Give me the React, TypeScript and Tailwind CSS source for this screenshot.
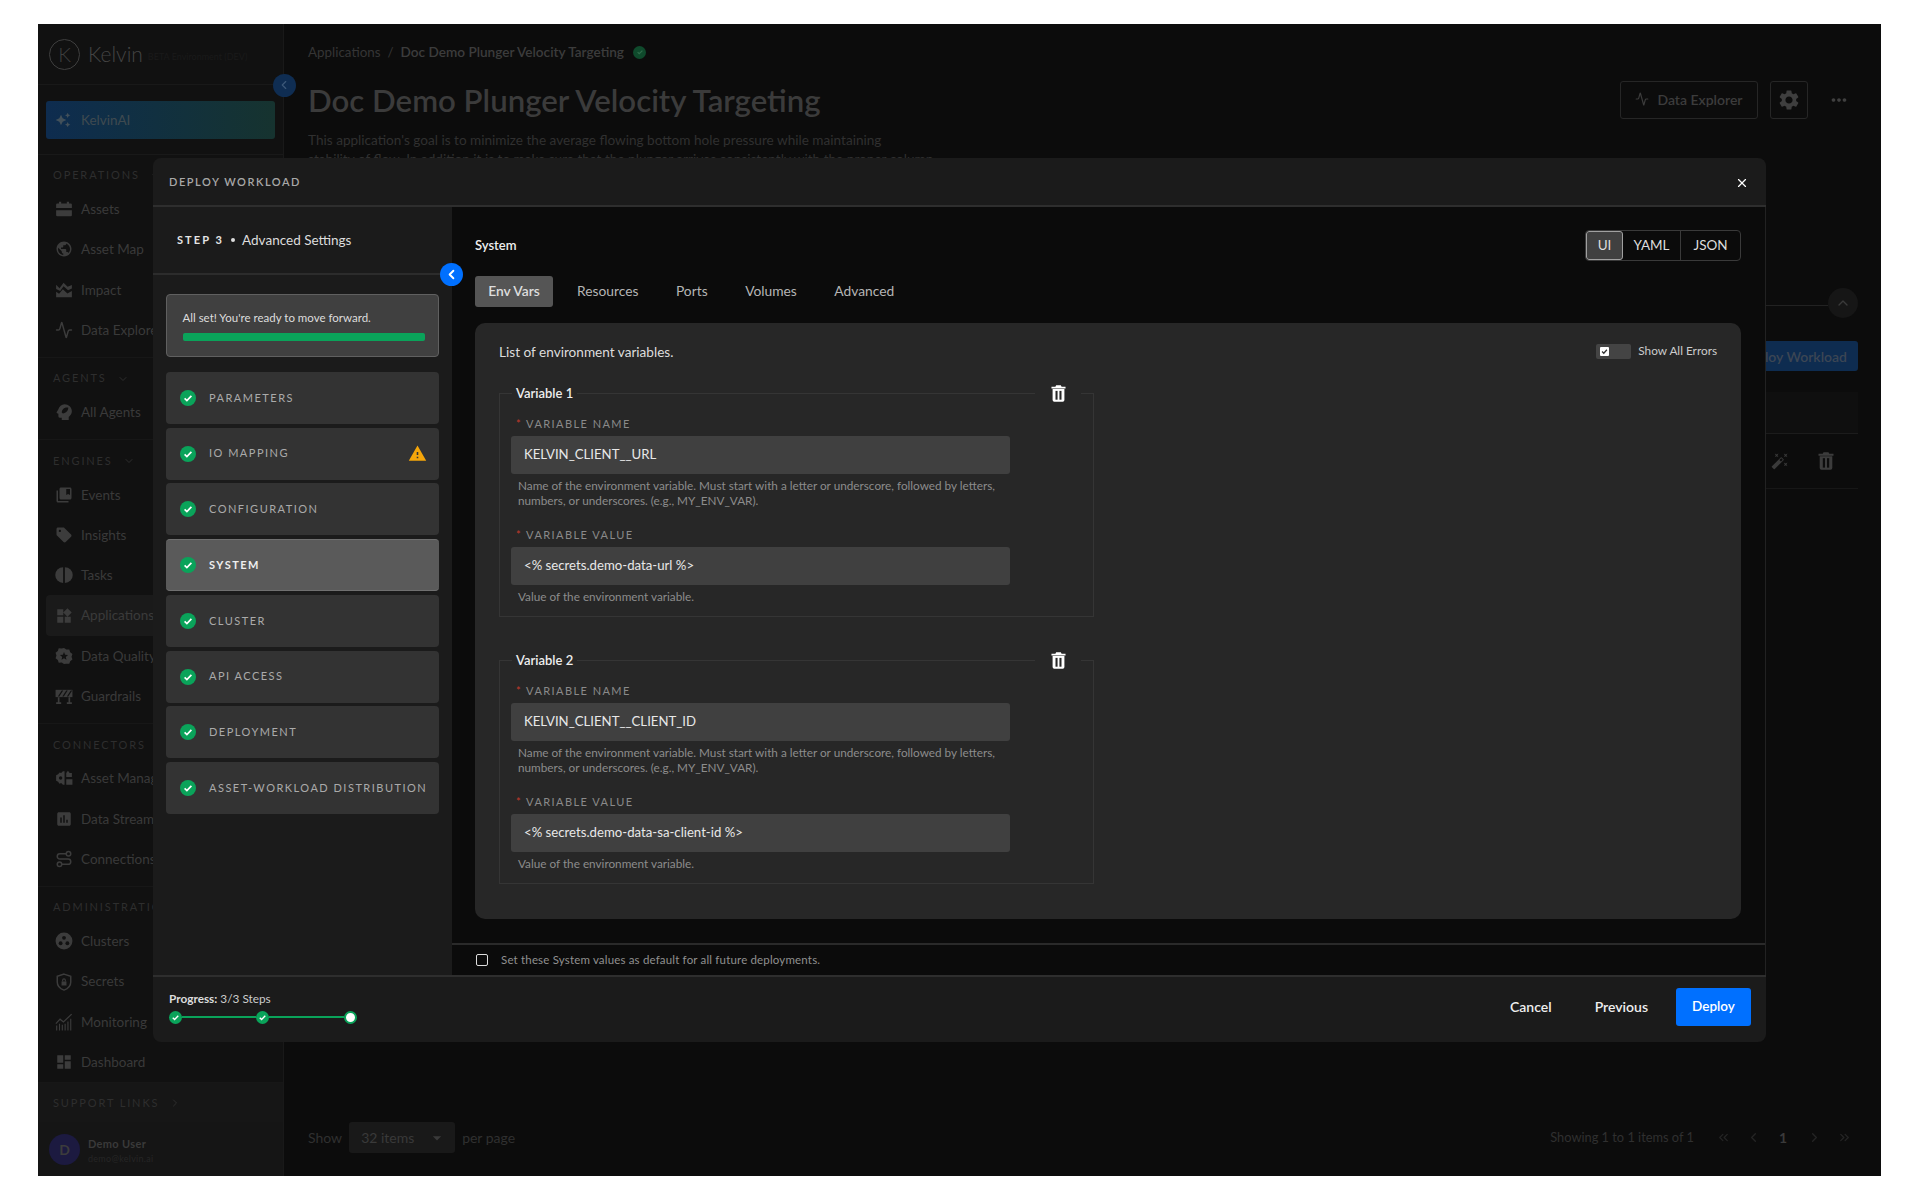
import React from "react";
import { Activity, ChevronDown, ChevronLeft, ChevronRight, ChevronUp, ChevronsLeft, ChevronsRight, Route, X } from "lucide-react";
import {
  MdAssessment, MdAutoAwesome, MdAutoFixHigh, MdCollectionsBookmark, MdDashboard, MdMoreHoriz,
  MdPublic, MdSell, MdSettings, MdWarning, MdWidgets, MdArrowDropDown,
} from "react-icons/md";

type IconProps = { size?: number; className?: string };
const Svg = ({ size = 18, className, children }: IconProps & { children: React.ReactNode }) => (
  <svg width={size} height={size} viewBox="0 0 16 16" fill="currentColor" className={className}>{children}</svg>
);
const BG = "#111111";
const AssetsIcon = (p: IconProps) => (
  <Svg {...p}><path d="M3.5 1.5h2v1.5h5V1.5h2V3h1.5a1 1 0 0 1 1 1v3.2H1V4a1 1 0 0 1 1-1h1.5z" /><path d="M1 9h14v4.5a1 1 0 0 1-1 1H2a1 1 0 0 1-1-1z" /></Svg>
);
const ImpactIcon = (p: IconProps) => (
  <Svg {...p}><path d="M1 7.2V3.4l3 3L7.6 1.6l3.6 3.6 3.8-1.6v3l-3.4 1.6-4-3.6-3 4.2z" /><path d="M1 9.6l2.6 1.8 3.4-4 4 3.6L15 8.8v5.7H1z" /></Svg>
);
const AgentIcon = (p: IconProps) => (
  <Svg {...p}><path d="M8.5 1C12 1 15 3.6 15 7.2c0 2.4-1.3 4.2-2.8 5.2V15H6v-1.800H4.500a1.500 1.500 0 0 1-1.500-1.500V9.500L1.800 9c-.4-.2-.5-.6-.3-1l1.300-2C3.700 3 5.800 1 8.500 1z" /><path d="M6 8.500c0-2.500 2-4.500 4.500-4.500h1.300c0 2.800-2 5-4.800 5.300L6 8.500z" fill={BG} /></Svg>
);
const TasksIcon = (p: IconProps) => (
  <Svg {...p}><path d="M7.200 1v14A7 7 0 0 1 7.200 1z" /><path d="M8.800 1a7 7 0 0 1 0 14z" /></Svg>
);
const QualityIcon = (p: IconProps) => (
  <Svg {...p}><path d="M8 .8l2.100 1.500 2.600-.1.800 2.400 2 1.600-.8 2.400.8 2.400-2 1.600-.8 2.300-2.600-.1L8 15.200l-2.100-1.400-2.600.1-.8-2.300-2-1.600.8-2.400-.8-2.400 2-1.600.8-2.400 2.600.1z" /><path d="M8 4.500l1 2.400 2.600.2-2 1.700.6 2.500L8 9.900l-2.200 1.400.6-2.500-2-1.700 2.600-.2z" fill={BG} /></Svg>
);
const GuardIcon = (p: IconProps) => (
  <Svg {...p}><path d="M.5 2.500h15V9H.5z" /><path d="M2.500 9h1.500v5.500H2.500zM12 9h1.500v5.500H12zM1 13.500h4.500V15H1zM10.500 13.500H15V15h-4.500z" /><path d="M2.500 8.500L6 3h1.300L3.800 8.500zM6.500 8.500L10 3h1.300L7.800 8.500zM10.500 8.500L14 3h1.300l-3.500 5.500z" fill={BG} /></Svg>
);
const AssetMgmtIcon = (p: IconProps) => (
  <Svg {...p}><path d="M8.500 2v12H7l-1.500-1.500L4 13l-1.200-1.700L1 10.500V8.300L.5 8l.5-.3V5.500l1.800-.8L4 3l1.500.5L7 2z" /><path d="M3.500 8a1.500 1.500 0 1 0 3 0 1.500 1.500 0 1 0-3 0z" fill={BG} /><path d="M10 3.500l1.500-2 1.500 2h2V7h-5zM10 9h5.500v5H10z" /></Svg>
);
const ClusterIcon = (p: IconProps) => (
  <Svg {...p}><circle cx="8" cy="8" r="7.500" /><circle cx="8" cy="5.200" r="1.700" fill={BG} /><circle cx="5" cy="10" r="1.700" fill={BG} /><circle cx="11" cy="10" r="1.700" fill={BG} /></Svg>
);
const SecretsIcon = (p: IconProps) => (
  <Svg {...p}><path d="M8 1l6 2v5c0 3.500-2.500 6-6 7.200C4.500 14 2 11.500 2 8V3z" fill="none" stroke="currentColor" strokeWidth="1.300" /><path d="M5.800 7.500h4.400v3.600H5.800z" /><path d="M6.800 7.500V6.400a1.200 1.200 0 0 1 2.400 0v1.100" fill="none" stroke="currentColor" strokeWidth="1" /></Svg>
);
const MonitorIcon = (p: IconProps) => (
  <Svg {...p}><path d="M.8 9.500l3.700-4 3 2.500L14.800 1" fill="none" stroke="currentColor" strokeWidth="1.100" /><path d="M1 11h1v4.500H1zM3.500 9.500h1v6h-1zM6 10.500h1v5H6zM8.500 9.500h1v6h-1zM11 7.500h1v8h-1zM13.500 5h1v10.500h-1z" /></Svg>
);

type Item = { label: string; icon: React.ComponentType<any>; active?: boolean };
const sections: { title: string; chevron?: boolean; pb: string; items: Item[] }[] = [
  { title: "OPERATIONS", chevron: true, pb: "pb-[7px]", items: [
    { label: "Assets", icon: AssetsIcon }, { label: "Asset Map", icon: MdPublic }, { label: "Impact", icon: ImpactIcon }, { label: "Data Explorer", icon: Activity },
  ] },
  { title: "AGENTS", chevron: true, pb: "pb-[7px]", items: [{ label: "All Agents", icon: AgentIcon }] },
  { title: "ENGINES", chevron: true, pb: "pb-[7px]", items: [
    { label: "Events", icon: MdCollectionsBookmark }, { label: "Insights", icon: MdSell }, { label: "Tasks", icon: TasksIcon },
    { label: "Applications", icon: MdWidgets, active: true }, { label: "Data Quality", icon: QualityIcon }, { label: "Guardrails", icon: GuardIcon },
  ] },
  { title: "CONNECTORS", pb: "pb-[7px]", items: [
    { label: "Asset Management", icon: AssetMgmtIcon }, { label: "Data Streams", icon: MdAssessment }, { label: "Connections", icon: Route },
  ] },
  { title: "ADMINISTRATION", pb: "", items: [
    { label: "Clusters", icon: ClusterIcon }, { label: "Secrets", icon: SecretsIcon }, { label: "Monitoring", icon: MonitorIcon }, { label: "Dashboard", icon: MdDashboard },
  ] },
];

function Sidebar() {
  return (
    <aside className="flex w-[246px] shrink-0 flex-col overflow-hidden border-r border-[#191919] bg-[#111111]">
      <div className="flex h-[61px] shrink-0 items-center border-b border-[#191919] pl-[11px]">
        <div className="flex h-[31px] w-[31px] items-center justify-center rounded-full border border-[#3f3f3f] text-[20px] font-light text-[#3f3f3f]">K</div>
        <span className="ml-[8px] text-[21px] font-light text-[#444444]">Kelvin</span>
        <span className="ml-[5px] mt-[6px] whitespace-nowrap text-[9px] text-[#1a1a1a]">BETA Environment (DEV)</span>
      </div>
      <div className="h-[70px] shrink-0 border-b border-[#191919] px-[8px] pt-[16px]">
        <div className="flex h-[38px] items-center rounded-[3px] bg-gradient-to-r from-[#0e2c4f] to-[#16332f] pl-[9px] text-[13.5px] text-[#3f4a50]">
          <MdAutoAwesome size={16} className="text-[#42505a]" />
          <span className="ml-[10px]">KelvinAI</span>
        </div>
      </div>
      {sections.map((s) => (
        <div key={s.title} className={`shrink-0 border-b border-[#171717] px-[8px] last:border-b-0 ${s.pb}`}>
          <div className="flex h-[34px] items-center pl-[7px] pt-[7px] text-[11px] tracking-[0.17em] whitespace-nowrap text-[#2e2e2e]">
            {s.title}
            {s.chevron && <ChevronDown size={12} className="ml-[10px]" />}
          </div>
          {s.items.map((it) => {
            const Icon = it.icon;
            return (
              <div key={it.label} className={`flex h-[40.3px] items-center rounded-[4px] pl-[9px] text-[13.5px] whitespace-nowrap text-[#3a3a3a] ${it.active ? "bg-[#1a1a1a]" : ""}`}>
                <Icon size={18} className="shrink-0 text-[#3c3c3c]" />
                <span className="ml-[8px]">{it.label}</span>
              </div>
            );
          })}
        </div>
      ))}
      <div className="mt-auto flex h-[39px] shrink-0 items-center bg-[#161616] pl-[15px] text-[11px] tracking-[0.17em] text-[#2e2e2e]">
        SUPPORT LINKS<ChevronRight size={12} className="ml-[10px]" />
      </div>
      <div className="flex h-[54px] shrink-0 items-center bg-[#151515] pl-[11px]">
        <div className="flex h-[31px] w-[31px] items-center justify-center rounded-full bg-[#1c1a40] text-[14px] font-bold text-[#3c3c3c]">D</div>
        <div className="ml-[8px] mt-[3px] leading-[15px]">
          <div className="text-[11px] font-bold tracking-[0.03em] text-[#3a3a3a]">Demo User</div>
          <div className="text-[9px] tracking-[0.03em] text-[#262626]">demo@kelvin.ai</div>
        </div>
      </div>
    </aside>
  );
}

function Main() {
  return (
    <main className="flex min-w-0 flex-1 flex-col bg-[#0c0c0c] pl-[24px] pr-[23px]">
      <div className="mt-[20px] flex h-[16px] items-center text-[13.4px] text-[#353535]">
        <span>Applications</span><span className="mx-[7px]">/</span>
        <span className="text-[13.6px] font-semibold text-[#3c3c3c]">Doc Demo Plunger Velocity Targeting</span>
        <span className="ml-[9px] flex h-[13px] w-[13px] items-center justify-center rounded-full bg-[#0f4a2c]"><svg width="8" height="8" viewBox="0 0 10 10"><path d="M2 5.2l2 2 4-4" fill="none" stroke="#2f6d4b" strokeWidth="1.5" /></svg></span>
      </div>
      <div className="mt-[21px] flex h-[38px] items-center justify-between">
        <h1 className="text-[31.2px] font-semibold text-[#3b3b3b]">Doc Demo Plunger Velocity Targeting</h1>
        <div className="flex items-center">
          <div className="flex h-[38px] w-[138px] items-center justify-center rounded-[3px] border border-[#262626] pb-[2px] text-[14px] font-semibold text-[#3c3c3c]"><Activity size={14} className="mr-[8px]" />Data Explorer</div>
          <div className="ml-[12px] flex h-[38px] w-[38px] items-center justify-center rounded-[3px] border border-[#262626]"><MdSettings size={24} className="text-[#3e3e3e]" /></div>
          <MdMoreHoriz size={22} className="ml-[20px] mr-[8px] text-[#404040]" />
        </div>
      </div>
      <p className="mt-[12px] whitespace-nowrap text-[13.6px] leading-[19px] text-[#303030]">This application's goal is to minimize the average flowing bottom hole pressure while maintaining<br />stability of flow. In addition it is to make sure that the plunger arrives consistently with the proper column</p>
      <div className="mt-[119px] flex h-[30px] items-center">
        <div className="mt-[4px] h-px flex-1 bg-[#222222]" />
        <div className="flex h-[30px] w-[30px] items-center justify-center rounded-full bg-[#161616]"><ChevronUp size={16} className="text-[#3a3a3a]" /></div>
      </div>
      <div className="mt-[23px] flex h-[30px] w-[130px] items-center justify-center self-end rounded-[3px] bg-[#0e2c50] text-[14px] font-semibold whitespace-nowrap text-[#3c4654]">Deploy Workload</div>
      <div className="mt-[21px] border-b border-[#171717]">
        <div className="h-[42px] border-b border-[#1c1c1c] bg-[#0f0f0f]" />
        <div className="flex h-[54px] items-center justify-end pr-[23px] text-[#3a3a3a]">
          <MdAutoFixHigh size={18} /><TrashIcon className="ml-[28px] h-[18px] w-[18px]" color="#3c3c3c" holes="#0c0c0c" />
        </div>
      </div>
      <div className="mb-[23px] mt-auto flex h-[31px] items-center text-[14px] text-[#303030]">
        <span>Show</span>
        <div className="ml-[7px] flex h-[31px] w-[106px] items-center justify-between rounded-[3px] bg-[#191919] pl-[12px] pr-[8px] text-[#3a3a3a]">32 items<MdArrowDropDown size={20} /></div>
        <span className="ml-[7px]">per page</span>
        <span className="ml-auto text-[12.8px]">Showing 1 to 1 items of 1</span>
        <ChevronsLeft size={15} className="ml-[22px] text-[#252525]" />
        <ChevronLeft size={15} className="ml-[15px] text-[#252525]" />
        <span className="ml-[18px] font-bold text-[#3a3a3a]">1</span>
        <ChevronRight size={15} className="ml-[20px] text-[#252525]" />
        <ChevronsRight size={15} className="ml-[15px] mr-[6px] text-[#252525]" />
      </div>
    </main>
  );
}

function TrashIcon({ className, color, holes }: { className?: string; color: string; holes: string }) {
  return (
    <svg viewBox="0 0 16 18" className={className}>
      <path d="M5.500 0.300h5l.8 1.400H15.500v2H.5v-2h4.200z" fill={color} />
      <path d="M1.700 4.300h12.600V16a1.800 1.800 0 0 1-1.800 1.800H3.500A1.800 1.800 0 0 1 1.700 16z" fill={color} />
      <rect x="4.800" y="6.200" width="2.200" height="9.400" fill={holes} />
      <rect x="9" y="6.200" width="2.200" height="9.400" fill={holes} />
    </svg>
  );
}

function Check({ size = 16 }: { size?: number }) {
  return (
    <svg width={size} height={size} viewBox="0 0 16 16" className="shrink-0">
      <circle cx="8" cy="8" r="8" fill="#0aa35a" />
      <path d="M4.600 8.300l2.300 2.200 4.500-4.600" fill="none" stroke="#fff" strokeWidth="1.700" />
    </svg>
  );
}

const steps = ["PARAMETERS", "IO MAPPING", "CONFIGURATION", "SYSTEM", "CLUSTER", "API ACCESS", "DEPLOYMENT", "ASSET-WORKLOAD DISTRIBUTION"];

function StepList() {
  return (
    <div className="flex w-[299px] shrink-0 flex-col bg-[#1b1b1b]">
      <div className="relative flex h-[68px] shrink-0 items-center border-b-2 border-[#2c2c2c] pl-[24px] text-[#dddddd]">
        <span className="text-[11px] font-bold tracking-[0.19em] text-[#e5e5e5]">STEP 3</span>
        <span className="mx-[7px] h-[4px] w-[4px] rounded-full bg-[#dddddd]" />
        <span className="text-[13.5px]">Advanced Settings</span>
        <div className="absolute -bottom-[13px] -right-[11px] z-10 flex h-[23px] w-[23px] items-center justify-center rounded-full bg-[#0070ff]"><ChevronLeft size={15} strokeWidth={3} className="text-white" /></div>
      </div>
      <div className="flex flex-col gap-[3.75px] px-[13px] pt-[19px]">
        <div className="mb-[11px] h-[63px] rounded-[4px] border border-[#606060] bg-[#404040] px-[15.5px] pt-[15px]">
          <div className="text-[11.5px] leading-[16px] text-[#dddddd]">All set! You're ready to move forward.</div>
          <div className="mt-[7px] h-[8px] w-[242px] rounded-[2px] bg-[#0aa35a]" />
        </div>
        {steps.map((s) => {
          const active = s === "SYSTEM";
          return (
            <div key={s} className={`flex h-[52px] items-center rounded-[4px] pl-[14px] pr-[14px] ${active ? "border-b border-t border-[#707070] bg-[#5a5a5a]" : "bg-[#333333]"}`}>
              <Check />
              <span className={`ml-[13px] whitespace-nowrap text-[11px] tracking-[0.135em] ${active ? "font-bold text-[#eeeeee]" : "text-[#aaaaaa]"}`}>{s}</span>
              {s === "IO MAPPING" && <MdWarning size={19} className="ml-auto mr-[-2px] text-[#f5a60a]" />}
            </div>
          );
        })}
      </div>
    </div>
  );
}

function Field({ label, value, help }: { label: string; value: string; help: React.ReactNode }) {
  return (
    <div>
      <div className="flex h-[14px] items-center pl-[5px] text-[11px] tracking-[0.13em] text-[#8a8a8a]">
        <span className="mr-[4px] text-[#c0392b]">*</span>{label}
      </div>
      <div className="mt-[5px] flex h-[38px] w-[499px] items-center rounded-[3px] bg-[#404040] pl-[13px] text-[13.2px] text-[#e8e8e8]">{value}</div>
      <div className="mt-[4px] w-[495px] pl-[7px] text-[11.75px] leading-[15px] text-[#8c8c8c]">{help}</div>
    </div>
  );
}

function VariableBox({ n, name, value }: { n: number; name: string; value: string }) {
  return (
    <div className="relative h-[224px] w-[595px] border border-[#353535] px-[11px] pt-[23px]">
      <div className="absolute -top-[9px] left-[12px] bg-[#272727] px-[4px] text-[13px] font-semibold leading-[16px] text-[#eeeeee]">Variable {n}</div>
      <div className="absolute -top-[9px] right-[12px] flex w-[46px] justify-center bg-[#272727]"><TrashIcon className="h-[17px] w-[15px]" color="#ffffff" holes="#272727" /></div>
      <Field label="VARIABLE NAME" value={name} help="Name of the environment variable. Must start with a letter or underscore, followed by letters, numbers, or underscores. (e.g., MY_ENV_VAR)." />
      <div className="mt-[20px]">
        <Field label="VARIABLE VALUE" value={value} help="Value of the environment variable." />
      </div>
    </div>
  );
}

function SystemPanel() {
  return (
    <div className="flex min-w-0 flex-1 flex-col border-r border-[#222222] bg-[#0b0b0b]">
      <div className="flex flex-1 flex-col pb-[24px] pl-[23px] pr-[24px] pt-[23px]">
        <div className="flex h-[31px] items-center justify-between">
          <span className="text-[13px] font-semibold text-[#eeeeee]">System</span>
          <div className="flex h-[31px] overflow-hidden rounded-[4px] border border-[#3a3a3a] text-[13.5px] text-[#dddddd]">
            <span className="flex w-[37px] items-center justify-center rounded-[3px] border border-[#a0a0a0] bg-[#404040]">UI</span>
            <span className="flex w-[58px] items-center justify-center border-r border-[#3a3a3a]">YAML</span>
            <span className="flex w-[59px] items-center justify-center">JSON</span>
          </div>
        </div>
        <div className="mt-[15px] flex h-[31px] items-center text-[13.8px] text-[#b5b5b5]">
          <span className="flex h-[31px] w-[78px] items-center justify-center rounded-[3px] bg-[#555555] font-semibold text-[#dddddd]">Env Vars</span>
          <span className="ml-[24px]">Resources</span>
          <span className="ml-[37.5px]">Ports</span>
          <span className="ml-[37.5px]">Volumes</span>
          <span className="ml-[37.5px]">Advanced</span>
        </div>
        <div className="mt-[16px] flex-1 rounded-[10px] bg-[#272727] pl-[24px] pt-[19px]">
          <div className="flex h-[20px] items-center justify-between pr-[24px]">
            <span className="text-[13.6px] text-[#dddddd]">List of environment variables.</span>
            <div className="-mt-[2px] flex items-center">
              <div className="flex h-[15px] w-[35px] items-center rounded-[2px] bg-[#444444] pl-[4px]">
                <span className="flex h-[9px] w-[9px] items-center justify-center rounded-[1px] bg-white"><svg width="7" height="7" viewBox="0 0 8 8"><path d="M1.2 4l2 2 3.5-4" fill="none" stroke="#333" strokeWidth="1.4" /></svg></span>
              </div>
              <span className="ml-[7px] text-[11.8px] text-[#cccccc]">Show All Errors</span>
            </div>
          </div>
          <div className="mt-[31px]"><VariableBox n={1} name="KELVIN_CLIENT__URL" value="<% secrets.demo-data-url %>" /></div>
          <div className="mt-[43px]"><VariableBox n={2} name="KELVIN_CLIENT__CLIENT_ID" value="<% secrets.demo-data-sa-client-id %>" /></div>
        </div>
      </div>
      <div className="flex h-[32px] shrink-0 items-center border-t-2 border-[#2a2a2a] pl-[24px]">
        <span className="h-[12px] w-[12px] rounded-[2px] border-[1.5px] border-[#dddddd]" />
        <span className="ml-[13px] text-[11.5px] tracking-[0.015em] text-[#909090]">Set these System values as default for all future deployments.</span>
      </div>
    </div>
  );
}

function Modal() {
  return (
    <div className="absolute left-[115px] top-[134px] flex h-[884px] w-[1613px] flex-col overflow-hidden rounded-[8px] bg-[#1b1b1b]">
      <div className="flex h-[49px] shrink-0 items-center justify-between border-b-2 border-[#2e2e2e] pl-[16px] pr-[17px] pt-[2px]">
        <span className="text-[11px] font-semibold tracking-[0.14em] text-[#a8a8a8]">DEPLOY WORKLOAD</span>
        <X size={14} strokeWidth={2} className="text-white" />
      </div>
      <div className="flex min-h-0 flex-1">
        <StepList />
        <SystemPanel />
      </div>
      <div className="flex h-[67px] shrink-0 items-center justify-between border-t-2 border-[#2e2e2e] pl-[16px] pr-[15px]">
        <div className="-mt-[5px]">
          <div className="text-[11.8px] leading-[15px] text-[#cccccc]"><span className="font-bold text-[#dddddd]">Progress:</span> 3/3 Steps</div>
          <div className="mt-[5px] flex items-center">
            <Check size={13} />
            <span className="h-[2px] w-[74px] bg-[#0aa35a]" />
            <Check size={13} />
            <span className="h-[2px] w-[75px] bg-[#0aa35a]" />
            <span className="h-[13px] w-[13px] rounded-full border-2 border-[#0aa35a] bg-white" />
          </div>
        </div>
        <div className="-mt-[6px] flex items-center text-[14px] font-semibold text-[#eeeeee]">
          <span>Cancel</span>
          <span className="ml-[43px]">Previous</span>
          <span className="ml-[28px] flex h-[38px] w-[75px] items-center justify-center rounded-[3px] bg-[#0070ff] text-[13.5px] text-white">Deploy</span>
        </div>
      </div>
    </div>
  );
}

export default function App() {
  return (
    <div className="min-h-[1200px] bg-white py-[24px] pl-[38px] pr-[39px] font-[Lato,sans-serif]">
      <div className="relative flex h-[1152px] overflow-hidden">
        <Sidebar />
        <div className="absolute left-[234.5px] top-[49.5px] z-10 flex h-[23px] w-[23px] items-center justify-center rounded-full bg-[#0f2d52]"><ChevronLeft size={14} className="text-[#3d5878]" /></div>
        <Main />
        <Modal />
      </div>
    </div>
  );
}
